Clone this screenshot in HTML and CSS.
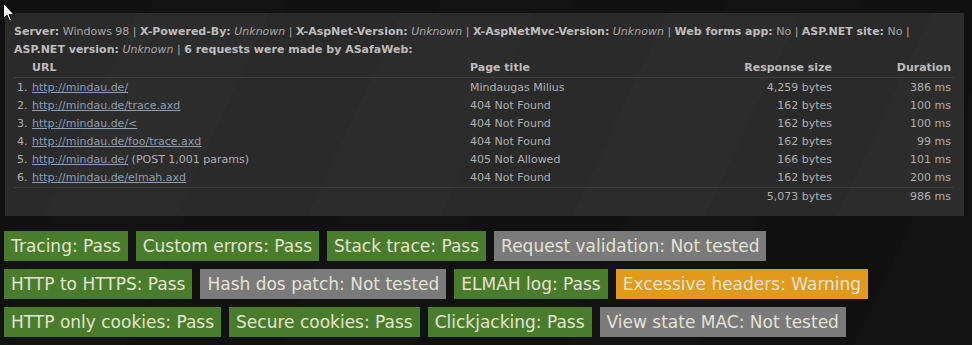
FILE: index.html
```html
<!DOCTYPE html>
<html lang="en">
    <head>
        <meta charset="UTF-8">
        <title>ASafaWeb scan results</title>
        <link rel="stylesheet" href="styles.css">
    </head>
    <body>
        <div class="clPainel">
            <p class="clInfo">
                <b>Server:</b> Windows 98 | <b>X-Powered-By:</b> <i>Unknown</i> | <b>X-AspNet-Version:</b> <i>Unknown</i> | <b>X-AspNetMvc-Version:</b> <i>Unknown</i> | <b>Web forms app:</b> No | <b>ASP.NET site:</b> No |<br>
                <b>ASP.NET version:</b> <i>Unknown</i> | <b>6 requests were made by ASafaWeb:</b>
            </p>
            <table class="clTabela">
                <colgroup>
                    <col class="clColUrl">
                    <col class="clColTitulo">
                    <col class="clColTamanho">
                    <col class="clColDuracao">
                </colgroup>
                <thead>
                    <tr>
                        <th class="clUrl"><span class="clNum"></span>URL</th>
                        <th>Page title</th>
                        <th class="clDir">Response size</th>
                        <th class="clDir">Duration</th>
                    </tr>
                </thead>
                <tbody>
                    <tr>
                        <td class="clUrl"><span class="clNum">1.</span><a href="#">http://mindau.de/</a></td>
                        <td>Mindaugas Milius</td>
                        <td class="clDir">4,259 bytes</td>
                        <td class="clDir">386 ms</td>
                    </tr>
                    <tr>
                        <td class="clUrl"><span class="clNum">2.</span><a href="#">http://mindau.de/trace.axd</a></td>
                        <td>404 Not Found</td>
                        <td class="clDir">162 bytes</td>
                        <td class="clDir">100 ms</td>
                    </tr>
                    <tr>
                        <td class="clUrl"><span class="clNum">3.</span><a href="#">http://mindau.de/&lt;</a></td>
                        <td>404 Not Found</td>
                        <td class="clDir">162 bytes</td>
                        <td class="clDir">100 ms</td>
                    </tr>
                    <tr>
                        <td class="clUrl"><span class="clNum">4.</span><a href="#">http://mindau.de/foo/trace.axd</a></td>
                        <td>404 Not Found</td>
                        <td class="clDir">162 bytes</td>
                        <td class="clDir">99 ms</td>
                    </tr>
                    <tr>
                        <td class="clUrl"><span class="clNum">5.</span><a href="#">http://mindau.de/</a> (POST 1,001 params)</td>
                        <td>405 Not Allowed</td>
                        <td class="clDir">166 bytes</td>
                        <td class="clDir">101 ms</td>
                    </tr>
                    <tr>
                        <td class="clUrl"><span class="clNum">6.</span><a href="#">http://mindau.de/elmah.axd</a></td>
                        <td>404 Not Found</td>
                        <td class="clDir">162 bytes</td>
                        <td class="clDir">200 ms</td>
                    </tr>
                </tbody>
                <tfoot>
                    <tr>
                        <td></td>
                        <td></td>
                        <td class="clDir">5,073 bytes</td>
                        <td class="clDir">986 ms</td>
                    </tr>
                </tfoot>
            </table>
        </div>

        <!-- Resultados dos testes -->
        <div class="clResultados">
            <div class="clLinha">
                <span class="clSelo clPassou">Tracing: Pass</span>
                <span class="clSelo clPassou">Custom errors: Pass</span>
                <span class="clSelo clPassou">Stack trace: Pass</span>
                <span class="clSelo clNaoTestado">Request validation: Not tested</span>
            </div>
            <div class="clLinha">
                <span class="clSelo clPassou">HTTP to HTTPS: Pass</span>
                <span class="clSelo clNaoTestado">Hash dos patch: Not tested</span>
                <span class="clSelo clPassou">ELMAH log: Pass</span>
                <span class="clSelo clAviso">Excessive headers: Warning</span>
            </div>
            <div class="clLinha">
                <span class="clSelo clPassou">HTTP only cookies: Pass</span>
                <span class="clSelo clPassou">Secure cookies: Pass</span>
                <span class="clSelo clPassou">Clickjacking: Pass</span>
                <span class="clSelo clNaoTestado">View state MAC: Not tested</span>
            </div>
        </div>

        <svg class="clCursor" width="13" height="20" viewBox="0 0 13 20">
            <path d="M0.5 0.5 L0.5 15.5 L4 12 L6.5 18 L8.5 17 L6 11.5 L11 11.5 Z" fill="#fff" stroke="#000" stroke-width="1"/>
        </svg>
    </body>
</html>
```

FILE: styles.css
```css
*{
    margin: 0px;
    padding: 0px;
}
body{
    background: #111111;
    background-image: repeating-linear-gradient(115deg, rgba(255, 255, 255, 0) 0px, rgba(255, 255, 255, 0) 140px, rgba(255, 255, 255, 0.006) 140px, rgba(255, 255, 255, 0.006) 260px);
    font-family: "DejaVu Sans", sans-serif;
    color: #b4b4b4;
    min-height: 345px;
}
.clPainel{
    margin: 13px 8px 0px 5px;
    padding: 10px 10px 10px 9px;
    background: #2a2a2a;
    background-image: repeating-linear-gradient(115deg, rgba(255, 255, 255, 0) 0px, rgba(255, 255, 255, 0) 120px, rgba(255, 255, 255, 0.01) 120px, rgba(255, 255, 255, 0.01) 240px);
    font-size: 11px;
    line-height: 18px;
}
.clInfo{
    color: #a8a8a8;
    white-space: nowrap;
}
.clInfo b{
    color: #bdbdbd;
}
.clTabela{
    width: 940px;
    table-layout: fixed;
    border-collapse: collapse;
}
.clColUrl{
    width: 456px;
}
.clColTitulo{
    width: 250px;
}
.clColTamanho{
    width: 112px;
}
.clColDuracao{
    width: 122px;
}
th{
    text-align: left;
    font-weight: bold;
    color: #bdbdbd;
    border-bottom: 1px solid #3c3c3c;
    height: 18px;
    padding: 0px;
}
td{
    height: 18px;
    padding: 0px;
    color: #b0b0b0;
    white-space: nowrap;
}
tbody tr:first-child td{
    padding-top: 1px;
}
tfoot td{
    border-top: 1px solid #3c3c3c;
}
.clUrl{
    padding-left: 3px;
}
.clDir{
    text-align: right;
}
th:last-child,
td:last-child{
    padding-right: 3px;
}
.clNum{
    display: inline-block;
    width: 15px;
}
a{
    color: #8f9fb4;
}
.clResultados{
    margin: 15px 0px 0px 4px;
    display: flex;
    flex-direction: column;
    gap: 8px;
}
.clLinha{
    display: flex;
    gap: 8px;
}
.clSelo{
    display: block;
    height: 30px;
    line-height: 30px;
    padding: 0px 7px;
    font-size: 17px;
    color: #e4e2d4;
    white-space: nowrap;
}
.clPassou{
    background: #4a7d2b;
}
.clNaoTestado{
    background: #7a7a7a;
}
.clAviso{
    background: #e19a1c;
}
.clCursor{
    position: absolute;
    left: 3px;
    top: 3px;
}
```
